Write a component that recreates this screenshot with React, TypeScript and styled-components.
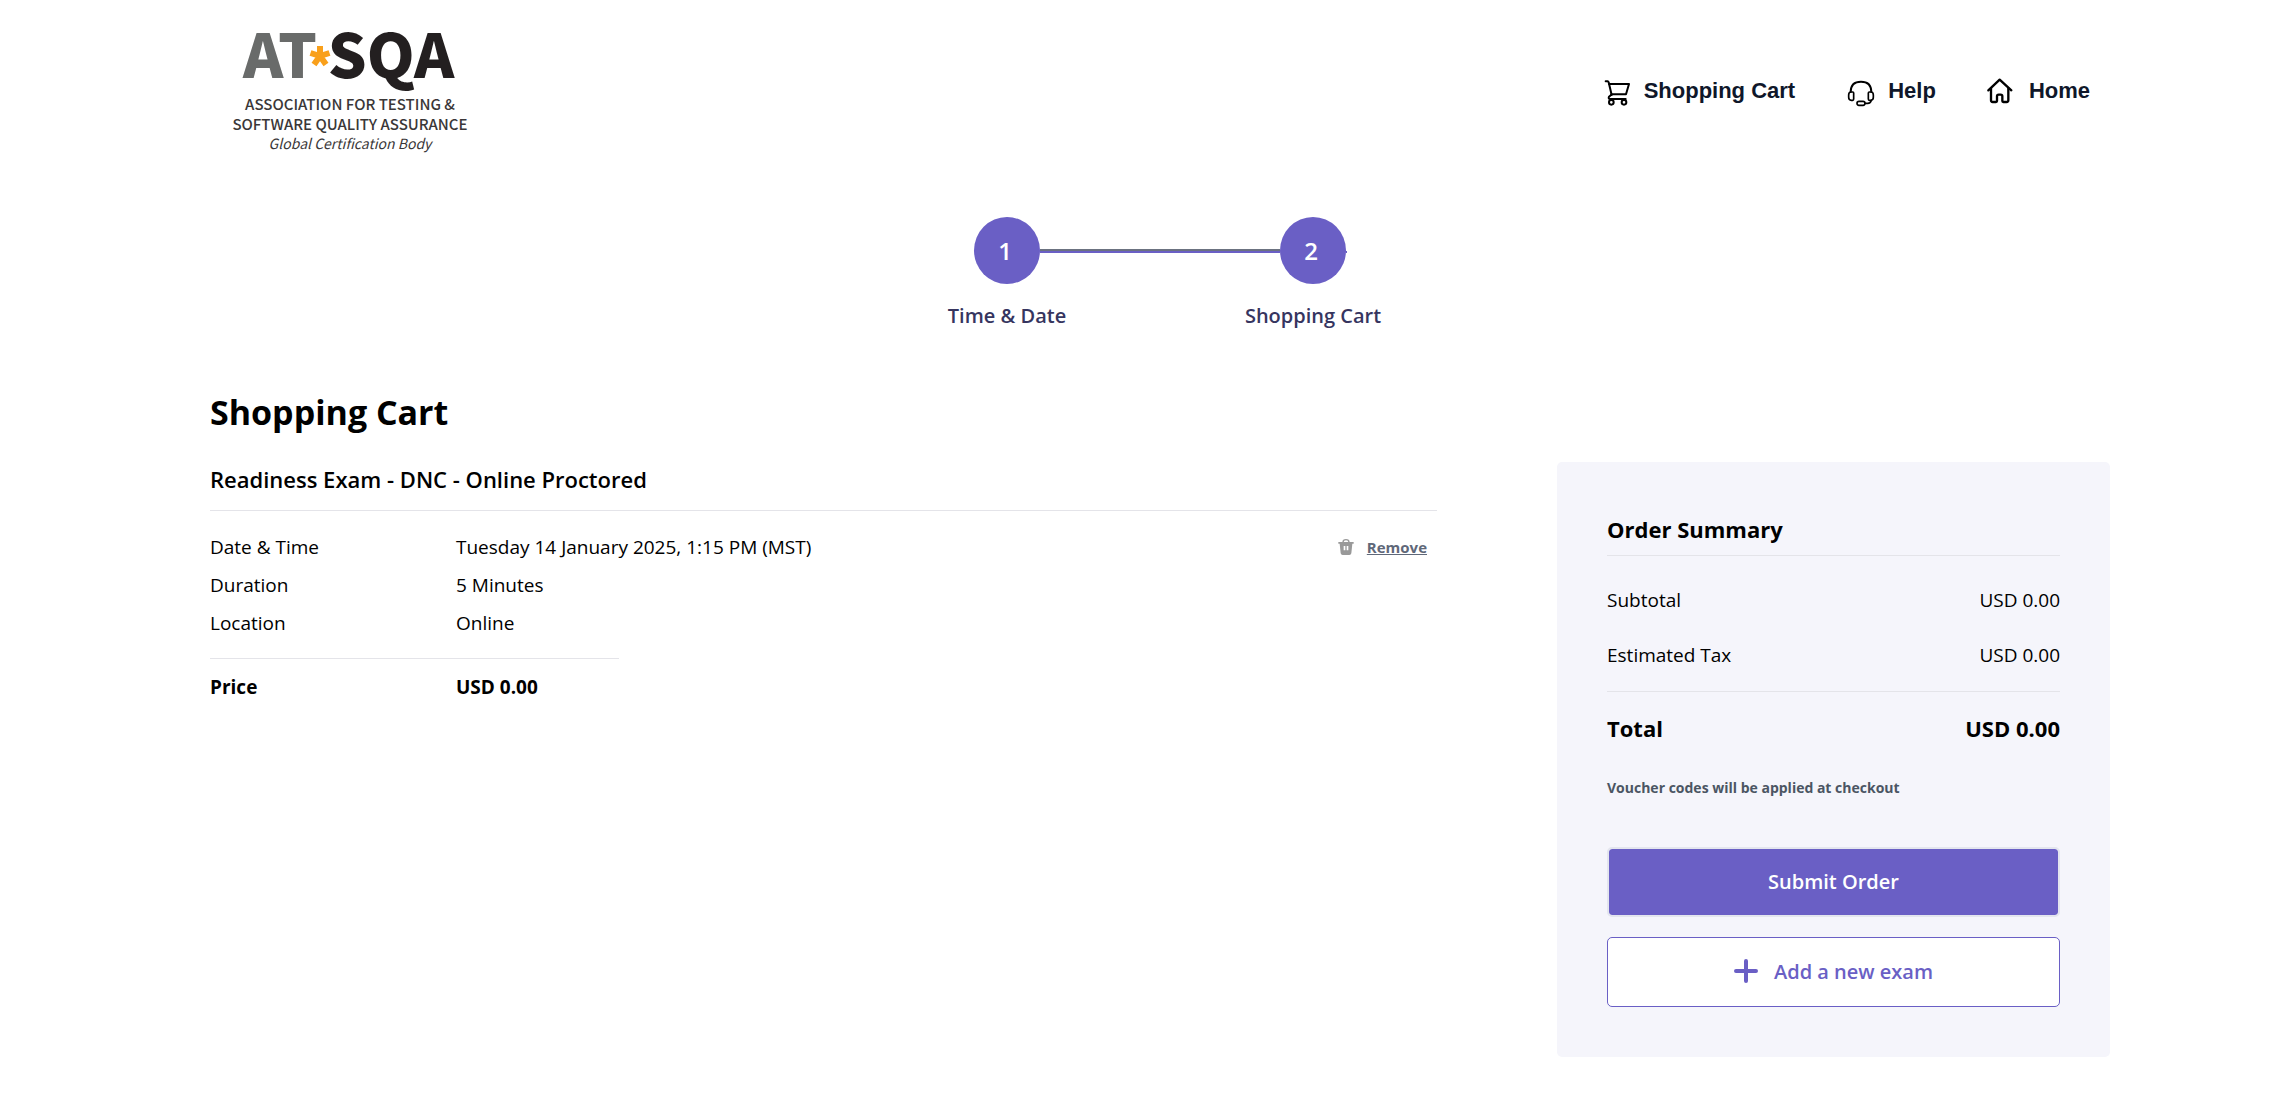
import React from "react";
import styled, { createGlobalStyle } from "styled-components";

const purple = "#6a5fc5";
const rule = "#e4e4e9";
const sans = `"Open Sans", "Noto Sans", sans-serif`;
const logoFont = `"Noto Sans CJK SC", "Noto Sans", sans-serif`;

const GlobalStyle = createGlobalStyle`
  *, *::before, *::after { box-sizing: border-box; }
  body { margin: 0; background: #fff; color: #000; font-family: ${sans}; font-size: 19px; line-height: 38px; }
  h1, h2, dl, dd, ol, p { margin: 0; padding: 0; }
  ol { list-style: none; }
  button { font-family: inherit; cursor: pointer; }
`;

const Page = styled.div`
  padding: 0 166px 59px 210px;
`;

const Header = styled.header`
  display: flex;
  align-items: center;
  justify-content: space-between;
  padding: 0 20px 35px;
`;

const LogoLink = styled.a`
  display: block;
  line-height: 0;
`;

const Nav = styled.nav`
  display: flex;
  align-items: center;
  gap: 52px;
`;

const NavLink = styled.a`
  display: flex;
  align-items: center;
  gap: 13px;
  color: #0f172a;
  font-family: "Liberation Sans", Arial, sans-serif;
  font-size: 22px;
  font-weight: 700;
  line-height: 28px;
  text-decoration: none;

  svg {
    overflow: visible;
    flex: none;
  }
`;

const Steps = styled.ol`
  display: flex;
  justify-content: center;
`;

const Step = styled.li`
  width: 306px;
  text-align: center;
`;

const StepTrack = styled.div`
  display: grid;
  grid-template-columns: 1fr 66px 1fr;
  align-items: center;
`;

const Connector = styled.span<{ $kind: "none" | "full" | "stub" }>`
  height: 4px;
  width: ${(p) => (p.$kind === "stub" ? "1px" : "100%")};
  visibility: ${(p) => (p.$kind === "none" ? "hidden" : "visible")};
  border-top: 2px solid ${(p) => (p.$kind === "full" ? "#6b7280" : "transparent")};
  border-bottom: 2px solid ${purple};
`;

const StepCircle = styled.span`
  display: flex;
  align-items: center;
  justify-content: center;
  height: 67px;
  padding-right: 4px;
  border-radius: 50%;
  background: ${purple};
  color: #fff;
  font-size: 24px;
  font-weight: 600;
`;

const StepLabel = styled.div`
  margin-top: 17px;
  color: #36355f;
  font-size: 20px;
  font-weight: 600;
  line-height: 30px;
`;

const PageTitle = styled.h1`
  margin: 58px 0 26px;
  font-size: 34px;
  font-weight: 700;
  line-height: 46px;
`;

const Columns = styled.div`
  display: grid;
  grid-template-columns: minmax(0, 1fr) 553px;
  align-items: start;
  gap: 120px;
  padding-top: 1px;
`;

const SectionTitle = styled.h2<{ $weight: number; $gap: number }>`
  padding-bottom: ${(p) => p.$gap}px;
  border-bottom: 1px solid ${rule};
  font-size: 22px;
  font-weight: ${(p) => p.$weight};
  line-height: 34px;
`;

const ItemBody = styled.div`
  display: flex;
  align-items: flex-start;
  justify-content: space-between;
  padding: 17px 10px 16px 0;
`;

const Details = styled.dl<{ $bold?: boolean }>`
  display: grid;
  grid-template-columns: 246px auto;
  font-weight: ${(p) => (p.$bold ? 700 : 400)};
`;

const PriceBlock = styled.div`
  &::before {
    content: "";
    display: block;
    width: 33.33%;
    margin-bottom: 9px;
    border-top: 1px solid ${rule};
  }
`;

const RemoveButton = styled.button`
  display: flex;
  align-items: center;
  gap: 13px;
  padding: 0;
  border: 0;
  background: none;
  color: #5f6879;
  font-size: 15px;
  font-weight: 700;
  line-height: 38px;
  text-decoration: underline;
`;

const Summary = styled.aside`
  padding: 50px;
  border-radius: 5px;
  background: #f5f5fb;
`;

const Amounts = styled.dl`
  display: grid;
  gap: 17px;
  padding: 25px 0 17px;
  border-bottom: 1px solid ${rule};
`;

const AmountRow = styled.div`
  display: flex;
  justify-content: space-between;
`;

const Total = styled.dl`
  display: flex;
  justify-content: space-between;
  margin-top: 19px;
  font-size: 22px;
  font-weight: 700;
  line-height: 34px;
`;

const Note = styled.p`
  margin: 33px 0 49px;
  color: #4b5563;
  font-size: 14px;
  font-weight: 700;
  line-height: 20px;
`;

const Actions = styled.div`
  display: grid;
  gap: 20px;
`;

const ActionButton = styled.button<{ $primary?: boolean }>`
  display: flex;
  align-items: center;
  justify-content: center;
  gap: 16px;
  width: 100%;
  height: 70px;
  padding: 0 0 2px;
  border: ${(p) => (p.$primary ? "2px solid #e3e5ee" : `1px solid ${purple}`)};
  border-radius: 5px;
  background: ${(p) => (p.$primary ? purple : "#fff")};
  background-clip: padding-box;
  color: ${(p) => (p.$primary ? "#fff" : purple)};
  font-size: 20px;
  font-weight: 600;
`;

const Logo = () => (
  <svg width="242" height="182" viewBox="230 0 242 182" fontFamily={logoFont} textAnchor="middle" fill="#3a3738">
    <text x="280" y="78" fontSize="61" fontWeight="900" fill="#696b6a">AT</text>
    <text x="391" y="78" fontSize="61" fontWeight="900" fill="#231f20">SQA</text>
    <g stroke="#f9a01b" strokeWidth="6">
      <path d="M320 56V46M320 56l-9.500-3M320 56l9.500-3M320 56l-6 8.500M320 56l6 8.500" />
    </g>
    <text x="350" y="110" fontSize="15" fontWeight="500">ASSOCIATION FOR TESTING &amp;</text>
    <text x="350" y="130" fontSize="15" fontWeight="500">SOFTWARE QUALITY ASSURANCE</text>
    <text x="350" y="149" fontSize="14" fontStyle="italic">Global Certification Body</text>
  </svg>
);

const lineIcon = {
  width: 28,
  height: 28,
  fill: "none",
  stroke: "#000",
  strokeLinecap: "round" as const,
  strokeLinejoin: "round" as const,
  "aria-hidden": true,
};

const CartIcon = () => (
  <svg {...lineIcon} viewBox="18 21 84 84" strokeWidth="6">
    <path d="M26 34h6q2 0 3 3l9 38" />
    <path d="M36 42h60l-9 31H43" />
    <path d="M43 74l-7 6q-3 7 4 7h46" />
    <circle cx="43" cy="97" r="7" />
    <circle cx="81" cy="97" r="7" />
  </svg>
);

const HeadsetIcon = () => (
  <svg {...lineIcon} viewBox="21 21 84 84" strokeWidth="5">
    <path strokeWidth="6" d="M32 66q0-31 31-31t31 31" />
    <path d="M33 66h5q3 0 3 3v18q0 4-3 4h-4q-8 0-8-9v-7q0-9 7-9z" />
    <path d="M93 66h-5q-3 0-3 3v18q0 4 3 4h4q8 0 8-9v-7q0-9-7-9z" />
    <rect x="51" y="94" width="24" height="12" rx="6" />
    <path d="M76 100h7q9 0 11-9" />
  </svg>
);

const HomeIcon = () => (
  <svg {...lineIcon} viewBox="21 21 84 84" strokeWidth="7">
    <path d="M22 61l34-32 35 32" />
    <path d="M30 55v36q0 5 5 5h10q3 0 3-3V79q0-5 5-5h6q5 0 5 5v14q0 3 3 3h10q5 0 5-5V55" />
  </svg>
);

const TrashIcon = () => (
  <svg width="16" height="16" viewBox="24 27 48 48" aria-hidden>
    <path d="M39 37q0-8 9-8t9 8" fill="none" stroke="#999" strokeWidth="4" />
    <path fill="#999" d="M25 36h46v5h-4l-3 29q-1 5-6 5H38q-5 0-6-5l-3-29h-4z" />
    <path fill="#fff" d="M41 48h5v13h-5zM50 48h5v13h-5z" />
  </svg>
);

const PlusIcon = () => (
  <svg width="24" height="24" viewBox="0 0 24 24" stroke={purple} strokeWidth="4" strokeLinecap="round" aria-hidden>
    <path d="M12 2v20M2 12h20" />
  </svg>
);

export default function App() {
  return (
    <>
      <GlobalStyle />
      <Page>
        <Header>
          <LogoLink href="#" aria-label="AT*SQA">
            <Logo />
          </LogoLink>
          <Nav>
            <NavLink href="#cart"><CartIcon />Shopping Cart</NavLink>
            <NavLink href="#help"><HeadsetIcon />Help</NavLink>
            <NavLink href="#home"><HomeIcon />Home</NavLink>
          </Nav>
        </Header>

        <main>
          <Steps>
            <Step>
              <StepTrack>
                <Connector $kind="none" />
                <StepCircle>1</StepCircle>
                <Connector $kind="full" />
              </StepTrack>
              <StepLabel>Time &amp; Date</StepLabel>
            </Step>
            <Step>
              <StepTrack>
                <Connector $kind="full" />
                <StepCircle>2</StepCircle>
                <Connector $kind="stub" />
              </StepTrack>
              <StepLabel>Shopping Cart</StepLabel>
            </Step>
          </Steps>

          <PageTitle>Shopping Cart</PageTitle>

          <Columns>
            <section>
              <SectionTitle $weight={600} $gap={14}>Readiness Exam - DNC - Online Proctored</SectionTitle>
              <ItemBody>
                <Details>
                  <dt>Date &amp; Time</dt>
                  <dd>Tuesday 14 January 2025, 1:15 PM (MST)</dd>
                  <dt>Duration</dt>
                  <dd>5 Minutes</dd>
                  <dt>Location</dt>
                  <dd>Online</dd>
                </Details>
                <RemoveButton type="button"><TrashIcon />Remove</RemoveButton>
              </ItemBody>
              <PriceBlock>
                <Details $bold>
                  <dt>Price</dt>
                  <dd>USD 0.00</dd>
                </Details>
              </PriceBlock>
            </section>

            <Summary>
              <SectionTitle $weight={700} $gap={9}>Order Summary</SectionTitle>
              <Amounts>
                <AmountRow>
                  <dt>Subtotal</dt>
                  <dd>USD 0.00</dd>
                </AmountRow>
                <AmountRow>
                  <dt>Estimated Tax</dt>
                  <dd>USD 0.00</dd>
                </AmountRow>
              </Amounts>
              <Total>
                <dt>Total</dt>
                <dd>USD 0.00</dd>
              </Total>
              <Note>Voucher codes will be applied at checkout</Note>
              <Actions>
                <ActionButton type="button" $primary>Submit Order</ActionButton>
                <ActionButton type="button"><PlusIcon />Add a new exam</ActionButton>
              </Actions>
            </Summary>
          </Columns>
        </main>
      </Page>
    </>
  );
}
